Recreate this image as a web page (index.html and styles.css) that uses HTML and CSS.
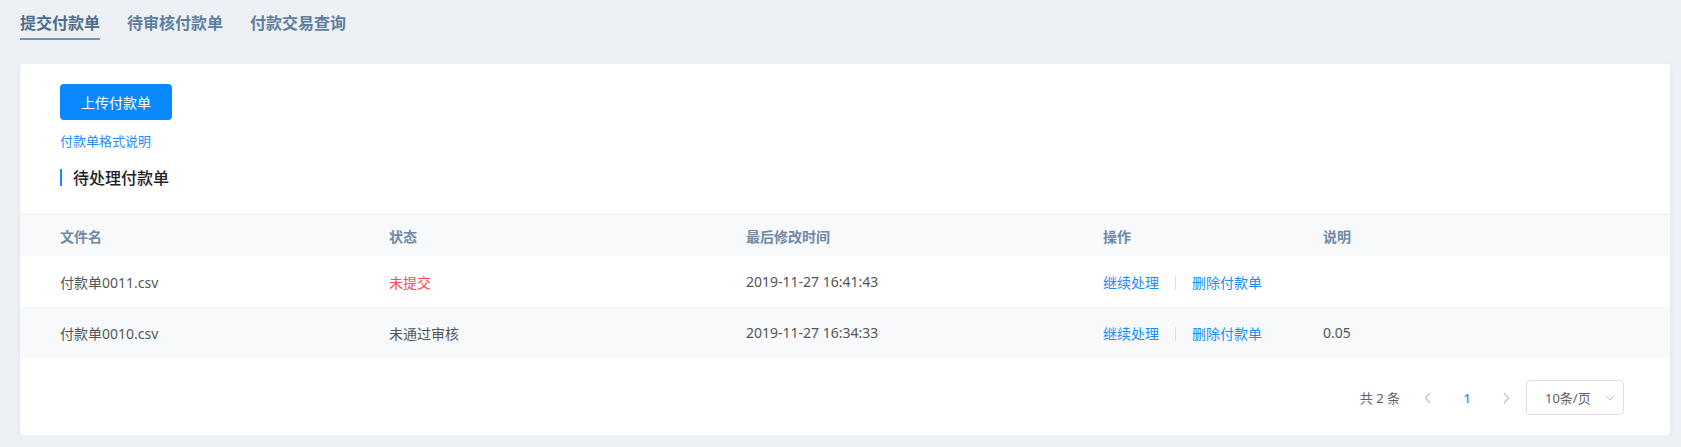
FILE: index.html
```html
<!DOCTYPE html>
<html lang="zh-CN">
<head>
<meta charset="UTF-8">
<title>付款单</title>
<link rel="stylesheet" href="styles.css">
</head>
<body>

<!-- top tabs -->
<div class="tabs">
  <a class="tab active">提交付款单</a>
  <a class="tab">待审核付款单</a>
  <a class="tab">付款交易查询</a>
</div>

<div class="card">
  <div class="card-head">
    <button class="btn-primary">上传付款单</button>
    <a class="link">付款单格式说明</a>
    <h3 class="section-title">待处理付款单</h3>
  </div>

  <table class="list">
    <colgroup>
      <col style="width:329px">
      <col style="width:357px">
      <col style="width:357px">
      <col style="width:220px">
      <col>
    </colgroup>
    <thead>
      <tr>
        <th>文件名</th>
        <th>状态</th>
        <th>最后修改时间</th>
        <th>操作</th>
        <th>说明</th>
      </tr>
    </thead>
    <tbody>
      <tr>
        <td>付款单0011.csv</td>
        <td class="red">未提交</td>
        <td>2019-11-27 16:41:43</td>
        <td class="ops"><a>继续处理</a><span class="sep"></span><a>删除付款单</a></td>
        <td></td>
      </tr>
      <tr>
        <td>付款单0010.csv</td>
        <td>未通过审核</td>
        <td>2019-11-27 16:34:33</td>
        <td class="ops"><a>继续处理</a><span class="sep"></span><a>删除付款单</a></td>
        <td>0.05</td>
      </tr>
    </tbody>
  </table>

  <!-- pagination -->
  <div class="pager">
    <span class="total">共 2 条</span>
    <span class="arrow">
      <svg width="8" height="12" viewBox="0 0 8 12"><path d="M6 1 1.5 6 6 11" fill="none" stroke="currentColor" stroke-width="1.3"/></svg>
    </span>
    <span class="num">1</span>
    <span class="arrow">
      <svg width="8" height="12" viewBox="0 0 8 12"><path d="M2 1 6.5 6 2 11" fill="none" stroke="currentColor" stroke-width="1.3"/></svg>
    </span>
    <div class="size-select">
      <span>10条/页</span>
      <svg width="10" height="6" viewBox="0 0 10 6"><path d="M1 1 5 5 9 1" fill="none" stroke="currentColor" stroke-width="1"/></svg>
    </div>
  </div>
</div>

</body>
</html>
```

FILE: styles.css
```css
body {
  margin: 0;
  padding: 0 11px 0 20px;
  background-color: #edf1f6;
  font-family: "Noto Sans", "Noto Sans CJK SC", sans-serif;
  font-size: 14px;
  color: #555;
}

a {
  cursor: pointer;
}

.tabs {
  display: flex;
  gap: 27px;
  height: 40px;
}

.tab {
  box-sizing: border-box;
  padding-top: 10px;
  height: 40px;
  font-size: 16px;
  line-height: 24px;
  font-weight: 600;
  color: #5f7e9e;
  font-family: "Noto Sans CJK SC", sans-serif;
}

.tab.active {
  color: #4f6c8b;
  border-bottom: 2px solid #6e94b9;
}

.card {
  margin-top: 24px;
  background-color: white;
  border-radius: 4px;
  box-shadow: 0 1px 4px rgba(40, 70, 110, 0.08);
  padding-bottom: 20px;
}

.card-head {
  padding: 20px 40px 0;
}

.btn-primary {
  display: block;
  width: 112px;
  height: 36px;
  border: none;
  border-radius: 4px;
  background-color: #0a89ff;
  color: white;
  font-family: "Noto Sans CJK SC", sans-serif;
  font-size: 14px;
  cursor: pointer;
}

.link {
  display: block;
  margin-top: 11px;
  line-height: 20px;
  color: #1a8cff;
  font-family: "Noto Sans CJK SC", sans-serif;
  font-size: 13px;
}

.section-title {
  margin: 14px 0 0;
  display: flex;
  align-items: center;
  height: 24px;
  font-size: 16px;
  font-weight: 500;
  color: #222;
  font-family: "Noto Sans CJK SC", sans-serif;
}

.section-title::before {
  content: "";
  width: 2px;
  height: 17px;
  background-color: #1a8cff;
  margin-right: 11px;
}

.list {
  margin-top: 25px;
  width: 100%;
  border-collapse: collapse;
  table-layout: fixed;
}

.list th,
.list td {
  padding: 0 0 0 40px;
  text-align: left;
  white-space: nowrap;
}

.list th {
  height: 41px;
  border-top: 1px solid #e6ecf2;
  background-color: #f7f9fb;
  color: #6e8aa6;
  font-weight: 600;
  font-family: "Noto Sans CJK SC", sans-serif;
}

.list td {
  height: 51px;
}

.list tbody tr:nth-child(even) td {
  background-color: #f7f9fb;
}

.red {
  color: #ff4d4f;
}

.ops a {
  color: #1a8cff;
}

.sep {
  display: inline-block;
  width: 1px;
  height: 14px;
  margin: 0 16px;
  background-color: #dcdfe6;
  vertical-align: -2px;
}

.pager {
  margin-top: 22px;
  padding-right: 46px;
  display: flex;
  justify-content: flex-end;
  align-items: center;
  height: 35px;
}

.total {
  color: #606266;
  font-size: 13px;
  margin-right: 20px;
}

.arrow {
  width: 16px;
  text-align: center;
  color: #c0c4cc;
  line-height: 0;
}

.num {
  width: 62px;
  text-align: center;
  color: #409eff;
  font-weight: 600;
  font-size: 13px;
}

.size-select {
  box-sizing: border-box;
  margin-left: 12px;
  width: 98px;
  height: 35px;
  border: 1px solid #dcdfe6;
  border-radius: 4px;
  display: flex;
  align-items: center;
  justify-content: space-between;
  padding: 0 8px 0 18px;
  color: #606266;
  font-size: 13px;
}

.size-select svg {
  color: #c0c4cc;
}
```
